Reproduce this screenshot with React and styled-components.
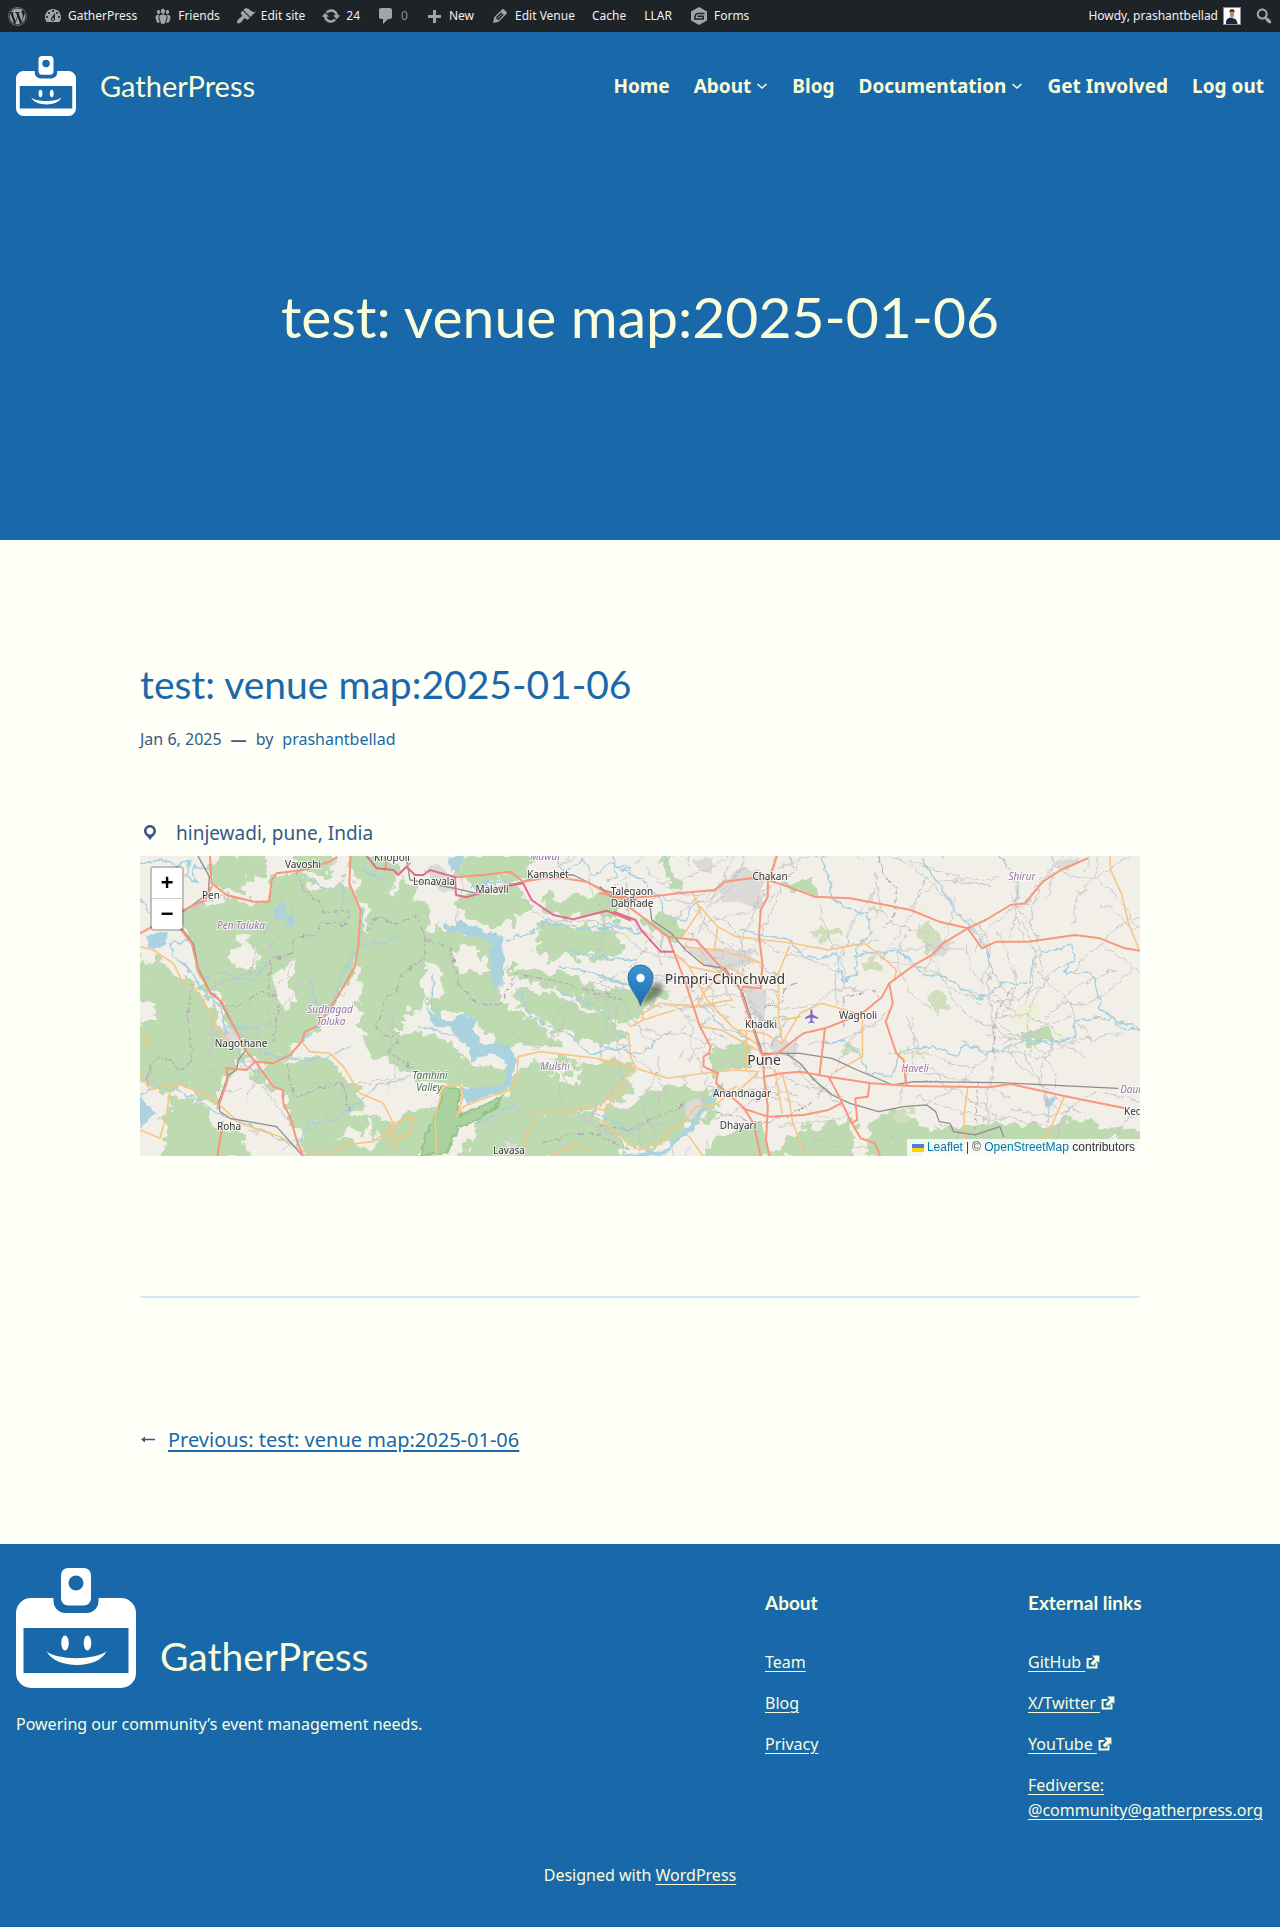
import React from "react";
import styled, { createGlobalStyle } from "styled-components";
import { FaWordpress } from "react-icons/fa";

const blue = "#1969aa";
const cream = "#fafdd9";
const paper = "#fefff6";
const ink = "#345a85";
const heading = 'Lato, "Liberation Sans", sans-serif';
const body = '"Noto Sans", "Open Sans", sans-serif';

const GlobalStyle = createGlobalStyle`
  *, *::before, *::after { box-sizing: border-box; }
  body { margin: 0; background: ${blue}; color: ${ink}; font: 16px/25px ${body}; }
  h1, h2, h3, p, ul { margin: 0; padding: 0; font-weight: 400; }
  ul { list-style: none; }
  a { color: inherit; }
  button { margin: 0; padding: 0; border: 0; background: none; color: inherit; font: inherit; cursor: pointer; }
  svg { display: block; flex: none; }
`;

/* ---------- admin bar ---------- */

const AdminBar = styled.nav`
  display: flex;
  justify-content: space-between;
  height: 32px;
  background: #1d2327;
  color: #f0f0f1;
  font-size: 12px;
  line-height: 32px;
`;
const AdminGroup = styled.ul`
  display: flex;
`;
const AdminLink = styled.a`
  display: flex;
  align-items: center;
  gap: 5px;
  height: 32px;
  padding: 0 ${(p) => (p.$plain ? "9px" : "8px")};
  color: ${(p) => (p.$dim ? "#8c9196" : "#f0f0f1")};
  text-decoration: none;
  white-space: nowrap;
  svg { color: #a0a5aa; }
`;
const Avatar = styled.svg`
  border: 1px solid #8c8f94;
  background: #fff;
`;
const SearchButton = styled.button`
  display: flex;
  align-items: center;
  padding: 0 6px 0 5px;
  height: 32px;
  color: #a0a5aa;
`;

const glyphs = {
  dashboard: "M3.76 16h12.48c1.1-1.37 1.76-3.11 1.76-5 0-4.42-3.58-8-8-8s-8 3.58-8 8c0 1.89.66 3.63 1.76 5zM10 4c.55 0 1 .45 1 1s-.45 1-1 1-1-.45-1-1 .45-1 1-1zM6 6c.55 0 1 .45 1 1s-.45 1-1 1-1-.45-1-1 .45-1 1-1zm8 0c.55 0 1 .45 1 1s-.45 1-1 1-1-.45-1-1 .45-1 1-1zm-5.37 5.55L12 7v6c0 1.1-.9 2-2 2s-2-.9-2-2c0-.57.24-1.08.63-1.45zM4 10c.55 0 1 .45 1 1s-.45 1-1 1-1-.45-1-1 .45-1 1-1zm12 0c.55 0 1 .45 1 1s-.45 1-1 1-1-.45-1-1 .45-1 1-1zm-5 3c0-.55-.45-1-1-1s-1 .45-1 1 .45 1 1 1 1-.45 1-1z",
  groups: "M8.03 4.46c-.29 1.28.55 3.46 1.97 3.46 1.41 0 2.25-2.18 1.96-3.46-.22-.98-1.08-1.63-1.96-1.63-.89 0-1.74.65-1.97 1.63zm-4.13.9c-.25 1.08.47 2.93 1.67 2.93s1.92-1.85 1.67-2.93c-.19-.83-.92-1.39-1.67-1.39s-1.48.56-1.67 1.39zm8.86 0c-.25 1.08.47 2.93 1.66 2.93 1.2 0 1.92-1.85 1.67-2.93-.19-.83-.92-1.39-1.67-1.39-.74 0-1.47.56-1.66 1.39zm-.59 11.43l1.25-4.3C14.2 10 12.71 8.47 10 8.47c-2.72 0-4.21 1.53-3.44 4.02l1.26 4.3C8.05 17.51 9 18 10 18c.98 0 1.94-.49 2.17-1.21zm-6.1-7.63c-.49.67-.96 1.83-.42 3.59l1.12 3.79c-.34.2-.77.31-1.2.31-.85 0-1.65-.41-1.85-1.03l-1.07-3.65c-.65-2.11.61-3.4 2.92-3.4.27 0 .54.02.79.06-.1.1-.2.22-.29.33zm8.35-.39c2.31 0 3.58 1.29 2.92 3.4l-1.07 3.65c-.2.62-1 1.03-1.85 1.03-.43 0-.86-.11-1.2-.31l1.11-3.77c.55-1.78.08-2.94-.42-3.61-.08-.11-.18-.23-.28-.33.25-.04.51-.06.79-.06z",
  brush: "M14.48 11.06L7.41 3.99l1.5-1.5c.5-.56 2.3-.47 3.51.32 1.21.8 1.43 1.28 2.91 2.1 1.18.64 2.45 1.26 4.45.85zm-.71.71L6.7 4.7 4.93 6.47c-.39.39-.39 1.02 0 1.41l1.06 1.06c.39.39.39 1.03 0 1.42-.6.6-1.43 1.11-2.21 1.69-.35.26-.7.53-1.01.84C1.43 14.23.4 16.08 1.4 17.07c.99 1 2.84-.03 4.18-1.36.31-.31.58-.66.85-1.02.57-.78 1.08-1.61 1.69-2.21.39-.39 1.02-.39 1.41 0l1.06 1.06c.39.39 1.02.39 1.41 0z",
  update: "M10.2 3.28c3.53 0 6.43 2.61 6.92 6h2.08l-3.5 4-3.5-4h2.32c-.45-1.97-2.21-3.45-4.32-3.45-1.45 0-2.73.71-3.54 1.78L4.95 5.66C6.23 4.2 8.11 3.28 10.2 3.28zm-.4 13.44c-3.52 0-6.43-2.61-6.92-6H.8l3.5-4c1.17 1.33 2.33 2.67 3.5 4H5.48c.45 1.97 2.21 3.45 4.32 3.45 1.45 0 2.73-.71 3.54-1.78l1.71 1.95c-1.28 1.46-3.15 2.38-5.25 2.38z",
  comment: "M5 2h9c1.1 0 2 .9 2 2v7c0 1.1-.9 2-2 2h-2l-5 5v-5H5c-1.1 0-2-.9-2-2V4c0-1.1.9-2 2-2z",
  plus: "M17 9v3h-5v5H9v-5H4V9h5V4h3v5h5z",
  pencil: "M13.89 3.39l2.71 2.72c.46.46.42 1.24.03 1.64l-8.01 8.02-5.56 1.16 1.16-5.58s7.6-7.63 7.99-8.03c.39-.39 1.22-.39 1.68.07zm-2.73 2.79l-5.59 5.61 1.11 1.11 5.54-5.65zm-2.97 8.23l5.58-5.6-1.07-1.08-5.59 5.6z",
  forms: "M10 1l8 4.500v9.500L10 19.500l-8-4.500V5.500zM15 7.300H9C6.500 7.300 5.200 9 5 13.500h9.800v-3.300H8.700",
  search: "M12.14 4.18c1.87 1.87 2.11 4.75.72 6.89.12.1.22.21.36.31.2.16.47.36.81.59.34.24.56.39.66.47.42.31.73.57.94.78.32.32.6.65.84 1 .25.35.44.69.59 1.04.14.35.21.68.18 1-.02.32-.14.59-.36.81s-.49.34-.81.36c-.31.02-.65-.04-.99-.19-.35-.14-.7-.34-1.04-.59-.35-.24-.68-.52-1-.84-.21-.21-.47-.52-.77-.93-.1-.13-.25-.35-.47-.66-.22-.32-.4-.57-.56-.78-.16-.2-.29-.35-.44-.5-2.07 1.09-4.69.76-6.44-.98-2.14-2.15-2.14-5.64 0-7.78 2.15-2.15 5.63-2.15 7.78 0zm-1.41 6.36c1.36-1.37 1.36-3.58 0-4.95-1.37-1.37-3.59-1.37-4.95 0-1.37 1.37-1.37 3.58 0 4.95 1.36 1.37 3.58 1.37 4.95 0z",
  location: "M10 2C6.69 2 4 4.69 4 8c0 2.02 1.17 3.71 2.53 4.89.43.37 1.18.96 1.85 1.83.74.97 1.41 2.01 1.62 2.71.21-.7.88-1.74 1.62-2.71.67-.87 1.42-1.46 1.85-1.83C14.83 11.71 16 10.02 16 8c0-3.31-2.69-6-6-6zm0 2.56c1.9 0 3.44 1.54 3.44 3.44S11.9 11.44 10 11.44 6.56 9.9 6.56 8 8.1 4.56 10 4.56z",
  external: "M9 2h9v9l-2.500-2L10 14.500 7 11.500 12.500 6zM13 15v-2.500l2.500-2.500v8H2V5h8L7.500 7.500h-3v8H13z",
};

const Glyph = ({ name, size = 20 }) => (
  <svg width={size} height={size} viewBox="0 0 20 20" fill="currentColor" aria-hidden="true">
    <path d={glyphs[name]} />
  </svg>
);

const FormsGlyph = () => (
  <svg width="20" height="20" viewBox="0 0 20 20" aria-hidden="true">
    <path d="M10 1l8 4.500v9L10 19l-8-4.500v-9z" fill="currentColor" />
    <path d="M15.500 7.500H8.800Q6 7.500 5.800 13H14.200V10.300H8.500" fill="none" stroke="#1d2327" strokeWidth="1.5" />
  </svg>
);

const adminItems = [
  { icon: "dashboard", text: "GatherPress" },
  { icon: "groups", text: "Friends" },
  { icon: "brush", text: "Edit site" },
  { icon: "update", text: "24" },
  { icon: "comment", text: "0", dim: true },
  { icon: "plus", text: "New" },
  { icon: "pencil", text: "Edit Venue" },
  { text: "Cache" },
  { text: "LLAR" },
  { icon: "forms", text: "Forms" },
];

/* ---------- header and hero ---------- */

const Hero = styled.header`
  background: ${blue};
  color: ${cream};
  padding-bottom: 182px;
`;
const SiteBar = styled.div`
  display: flex;
  align-items: center;
  justify-content: space-between;
  padding: 24px 16px;
`;
const Brand = styled.div`
  display: flex;
  align-items: ${(p) => (p.$large ? "flex-end" : "center")};
  gap: 24px;
  font-family: ${heading};
`;
const BrandName = styled.a`
  font-size: ${(p) => (p.$large ? "39px" : "29px")};
  line-height: ${(p) => (p.$large ? "64px" : "40px")};
  text-decoration: none;
`;
const SiteNav = styled.ul`
  display: flex;
  gap: 24px;
  font-size: 19px;
  font-weight: 700;
  line-height: 32px;
`;
const NavItem = styled.li`
  display: flex;
  align-items: center;
  gap: 5px;
`;
const NavLink = styled.a`
  text-decoration: none;
`;
const HeroTitle = styled.h1`
  padding: 134px 16px 0;
  font-family: ${heading};
  font-size: 57px;
  line-height: 84px;
  text-align: center;
`;

const Badge = ({ size }) => (
  <svg width={size} height={size} viewBox="0 0 120 120" fill="#fff" role="img" aria-label="GatherPress logo">
    <path fillRule="evenodd" d="M52 0h16a7 7 0 0 1 7 7v23.500a7 7 0 0 1-7 7H52a7 7 0 0 1-7-7V7a7 7 0 0 1 7-7zm8 7.500a7.500 7.500 0 1 0 0 15 7.500 7.500 0 0 0 0-15z" />
    <path fillRule="evenodd" d="M15 30h22.500v3A12 12 0 0 0 49.500 45h21a12 12 0 0 0 12-12v-3H105a15 15 0 0 1 15 15v60a15 15 0 0 1-15 15H15a15 15 0 0 1-15-15V45a15 15 0 0 1 15-15zM7.500 60v45h105V60z" />
    <ellipse cx="49" cy="75" rx="3.800" ry="7.500" />
    <ellipse cx="71.500" cy="75" rx="3.800" ry="7.500" />
    <path d="M30.500 83c8 9.500 51 9.500 60 0-7 18.500-52 18.500-60 0z" />
  </svg>
);

const Chevron = () => (
  <svg width="12" height="12" viewBox="0 0 12 12" fill="none" stroke="currentColor" strokeWidth="1.5" aria-hidden="true">
    <path d="M1.500 4L6 8l4.500-4" />
  </svg>
);

/* ---------- article ---------- */

const Page = styled.main`
  background: ${paper};
`;
const Article = styled.article`
  max-width: 1032px;
  margin: 0 auto;
  padding: 114px 16px 88px;
`;
const PostTitle = styled.h2`
  color: ${blue};
  font-family: ${heading};
  font-size: 39px;
  line-height: 60px;
`;
const Meta = styled.p`
  display: flex;
  gap: 9px;
  margin-top: 13px;
`;
const Dash = styled.span`
  font-weight: 700;
`;
const MetaLink = styled.a`
  color: ${blue};
  text-decoration: none;
`;
const Address = styled.p`
  display: flex;
  align-items: center;
  gap: 16px;
  margin: 66px 0 8px;
  font-size: 19px;
  line-height: 30px;
`;
const Divider = styled.hr`
  margin: 140px 0 126px;
  border: 0;
  border-top: 2px solid #d3e8f3;
`;
const Pager = styled.nav`
  display: flex;
  align-items: center;
  gap: 12px;
  font-size: 20px;
  line-height: 32px;
`;
const PagerLink = styled.a`
  color: ${blue};
  text-underline-offset: 3px;
`;

/* ---------- map ---------- */

const MapFrame = styled.section`
  position: relative;
  height: 300px;
  overflow: hidden;
  background: #f2efe9;
`;
const MapCanvas = styled.svg`
  width: 100%;
  height: 100%;
`;
const ZoomControl = styled.div`
  position: absolute;
  top: 10px;
  left: 10px;
  display: flex;
  flex-direction: column;
  border: 2px solid rgba(0, 0, 0, 0.2);
  border-radius: 4px;
  background-clip: padding-box;
`;
const ZoomButton = styled.button`
  width: 30px;
  height: 30px;
  padding-top: 4px;
  background: #fff;
  color: #000;
  font: bold 22px/26px "Liberation Mono", monospace;
  &:first-child { border-radius: 2px 2px 0 0; height: 31px; border-bottom: 1px solid #ccc; }
  &:last-child { border-radius: 0 0 2px 2px; }
`;
const Attribution = styled.div`
  position: absolute;
  right: 0;
  bottom: 0;
  display: flex;
  align-items: center;
  gap: 3px;
  padding: 0 5px;
  background: rgba(255, 255, 255, 0.8);
  color: #333;
  font: 12px/17px "Liberation Sans", Arial, sans-serif;
  a { color: #0078a8; text-decoration: none; }
`;

const forestWest = [
  "M260 50L395 50 400 100 350 110 330 150 280 145 245 110Z",
  "M165 225L240 190 420 195 435 110 520 108 540 160 600 170 640 120 690 210 685 330 650 420 600 480 545 560 500 600 430 660 380 650 330 590 280 480 240 460 200 380 185 290Z",
  "M480 50L600 50 590 85 520 95ZM670 50L790 60 810 110 760 130 780 170 720 190 690 150Z",
  "M30 355L100 370 150 430 190 440 240 510 270 590 330 640 290 700 250 780 150 730 60 740 30 700Z",
  "M120 780L200 800 250 860 330 890 350 950 100 950 120 880Z",
  "M370 700L430 670 470 660 620 670 690 770 650 820 560 830 500 860 460 750Z",
  "M705 290L740 200 830 140 880 210 885 350 870 480 800 560 740 610 700 560Z",
  "M890 290L960 260 1080 310 1090 420 1120 500 1200 540 1270 600 1150 600 1060 560 1000 500 920 520 880 430Z",
  "M1000 60L1190 50 1180 100 1060 130 990 100ZM1000 170L1150 150 1190 200 1120 260 1010 220Z",
  "M1250 190L1420 165 1500 190 1440 210 1300 225ZM1215 270L1340 260 1465 290 1440 345 1310 330 1240 350Z",
  "M1150 395L1240 400 1350 440 1490 465 1500 510 1400 480 1300 450ZM1160 450L1280 480 1400 530 1470 590 1380 600 1250 540 1180 490Z",
  "M1160 690L1300 665 1500 690 1480 760 1400 800 1230 820 1190 900 1170 950 1000 950 1050 850 1130 770Z",
  "M1210 870L1260 830 1400 830 1440 860 1470 950 1180 950Z",
  "M700 600L860 580 960 620 1020 670 1130 700 1100 740 980 740 940 720 870 700 740 640Z",
  "M520 870L650 830 760 860 900 790 960 830 900 950 530 950Z",
  "M1200 600L1290 620 1160 610ZM1050 550L1200 560 1250 600 1100 620Z",
];
const clearings = [
  "M315 310L345 285 395 340 380 385 310 375Z",
  "M440 400L490 360 485 430 500 490 460 500 430 440Z",
  "M30 490L90 500 60 540 30 560Z",
  "M560 640L640 600 690 590 760 680 740 730 690 740Z",
  "M860 430L905 370 950 400 930 480 880 470Z",
  "M960 330L1040 320 1070 400 1000 390Z",
  "M1250 700L1360 680 1330 740Z",
  "M620 890L740 850 730 920Z",
  "M1150 300L1240 310 1220 380 1150 370Z",
];
const forestEast = [
  "M0 180L60 190 40 215 0 210ZM0 290L50 295 40 345 0 350ZM0 460L90 450 180 470 120 520 0 530ZM0 550L40 560 40 600 0 600ZM0 670L50 660 60 760 0 760Z",
  "M0 830L80 800 200 740 290 765 330 800 250 850 130 930 60 890 0 880Z",
  "M120 240L205 240 215 290 170 290ZM180 50L200 60 195 95 185 90ZM205 110L225 120 220 155 200 150ZM520 130L590 125 580 145 530 145Z",
  "M310 650L400 620 420 670 330 685ZM290 950L370 880 440 860 460 950ZM480 950L580 870 700 850 700 950Z",
  "M760 860L820 820 900 850 900 950 760 950ZM900 890L1090 850 1200 870 1360 840 1410 870 1500 880 1500 900 900 920ZM1190 580L1250 580 1260 600 1200 600Z",
];
const scrub = [
  "M890 240L940 260 960 310 930 350 900 310ZM590 280L650 265 680 290 620 310ZM920 480L960 460 990 500 940 520ZM730 350L780 360 800 400 740 390ZM670 615L710 620 720 640 690 640ZM820 820L870 810 890 840 830 840ZM1340 145L1380 150 1350 170ZM755 200L790 190 770 240Z",
];
const farmland = [
  "M840 620L920 620 930 655 860 670ZM1170 500L1225 510 1220 570 1170 560ZM1280 570L1330 580 1300 610ZM890 190L940 200 900 220ZM70 280L110 260 90 310Z",
];
const urbanEast = [
  "M330 130L400 80 460 100 450 210 400 190 340 180ZM400 440L470 450 460 540 420 520ZM240 790L290 780 260 840 235 830ZM260 60L320 50 310 100 270 90ZM230 320L420 330 430 370 330 400ZM480 600L560 610 540 650 480 640ZM1280 60L1340 50 1330 80 1290 90ZM920 310L990 300 960 350 930 340Z",
];
const urbanWest = ["M880 90L920 70 960 110 970 160 930 150ZM275 560L300 560 330 600 290 610ZM350 870L400 860 380 890ZM1110 905L1170 910 1150 930ZM600 60L625 50 610 80Z"];
const lakesWest = [
  "M940 250L970 262 990 240 1030 262 1075 275 1120 290 1118 440 1090 448 1085 390 1080 310 1040 290 990 275 940 272Z",
  "M890 500L910 525 960 545 1010 520 1040 540 1030 570 1060 610 1140 612 1158 660 1145 740 1080 765 1010 790 990 745 1060 740 1120 735 1130 660 1080 640 1020 665 1020 620 980 590 960 560 910 560Z",
  "M430 200L460 185 475 230 500 245 485 265 460 240 435 235Z",
  "M950 50L1000 50 985 100 960 90ZM50 290L110 275 105 315 70 330 50 320ZM30 760L45 790 75 820 40 860 30 860Z",
];
const riversWest = [
  "M30 70L90 60 140 75 180 60 170 110 200 130 190 80 240 90M30 180L60 215M230 410L270 395 340 420 380 410 410 370",
  "M180 300L120 310 130 350 170 380 220 450 270 500 290 590 330 640 350 680 400 700M400 640L500 660 580 655 660 620",
  "M540 420L560 490 580 540M520 600L600 520 640 400 690 320M700 200L690 300M640 120L640 210M700 320L810 290",
  "M910 400L905 500 960 560M880 560L980 590M1170 450L1200 530 1330 590 1370 640 1500 620",
  "M520 100L560 130 600 155M1190 50L1280 50 1300 100 1360 60 1390 110 1440 70 1500 90M1130 300L1200 280 1250 245 1350 265 1500 265",
  "M1290 380L1400 400 1500 440M1290 455L1400 500 1490 600M1310 330L1400 350 1500 360M30 760L90 740 140 750 220 790 280 830 400 870 490 920",
  "M500 920L540 850 620 840 680 790 740 740 840 710M1040 850L1150 795 1210 830 1200 840M700 90L760 120M1020 140L1080 125 1180 130M290 560L390 560M1380 820L1430 830 1500 880",
];
const riversEast = [
  "M40 50L45 110 20 120M60 90L120 120 170 180 180 230 240 240 260 200M530 50L540 80M620 50L640 110 650 180 700 210 750 220 760 280 720 320 715 350",
  "M390 270L440 280 530 300 570 350 620 355 660 340 680 430 720 400 720 350 760 335 850 340 900 400 960 410 1060 475 1130 430 1200 430 1220 350 1260 330 1320 315 1330 350 1300 400 1380 400 1400 500 1460 560 1512 570",
  "M900 60L960 150 1000 220 1030 250 1080 320 1100 400M1120 50L1170 120 1170 180M0 250L60 260 110 280M0 350L100 360M0 410L80 440M480 620L530 530 500 530 460 560",
  "M730 660L750 700 820 710 840 630 930 620 1000 650 1020 610 1080 640 1140 620 1210 600 1270 610 1330 590 1330 540 1400 530 1512 560M0 620L120 640 170 590",
  "M280 490L340 560 420 600M620 610L680 600 730 650M180 70L200 40M960 50L950 0",
];
const boundaries = [
  ["w", "M500 95L520 150 570 190 580 220 660 210 650 250 570 250 560 290 500 290 480 340 420 360 420 460M440 470L390 460 320 500 270 495M440 470L450 520 430 600M190 430L170 530 190 660 150 690 110 650 60 670 50 740"],
  ["w", "M710 270L740 230 800 255 860 225 885 290 885 350 820 400 800 450 770 470 740 560 760 590 810 580 780 640 870 700M470 670L480 730 500 770 560 750 640 730 660 820M890 300L960 320 990 440 1040 490 1110 495 1160 400 1300 430 1480 480M1240 910L1330 880 1390 880 1500 930"],
  ["e", "M780 50L800 110 830 150 820 240 780 270M550 430L520 440 510 490 460 500M680 560L680 470 760 450 790 480M1100 640L1105 530 1160 440M1060 730L1050 870M330 820L450 850 530 830 600 780M0 860L80 870 240 790"],
];
const orangeWest = [
  "M30 320L70 330 130 370 160 430 190 440 230 500 270 580 320 620M30 580L58 600 40 620M30 700L60 750 140 730 240 770 330 850 450 890 520 935 620 935 640 915 730 905 790 860",
  "M120 750L110 820 90 895 30 870M515 605L540 635 600 640 640 680 690 760 760 790 790 850 770 890 800 930M850 830L790 850 800 900 840 880ZM920 950L915 830 940 740 990 735 1000 770 980 830 1000 800 1050 780 1140 750 1160 720 1165 650 1230 635 1400 655 1500 680",
  "M1180 920L1190 880 1215 850 1200 820 1300 820 1370 800 1420 810 1450 780 1490 740M1260 940L1320 930 1330 910 1380 930",
];
const orangeEast = [
  "M120 520L170 490 270 500 340 485 370 480M260 160L280 210 230 290M280 200L330 260 380 290 460 300 540 310 640 330 740 310 790 350 830 390 825 420M530 320L500 400 500 540 510 600M510 610L560 520 620 490 720 520",
  "M735 530L735 650 660 695M510 540L560 530M80 580L85 650 100 680 60 730 0 800M0 660L100 685 190 715 290 700 380 690 440 695M120 540L85 560M120 520L120 540 210 510",
  "M1428 50L1430 90 1460 160 1480 250 1510 330M1030 740L1020 820 1020 950M1300 770L1260 870 1240 900M490 690L500 760 510 820M510 700L530 780 540 850 570 930 580 950",
  "M210 340L250 380 280 440 300 480 370 560 450 620M230 320L330 330 400 350 450 370M330 260L320 330M360 380L420 420M270 500L290 460 350 380M280 560L340 570 440 630M410 570L410 690M440 700L380 760M390 570L460 580 510 610M280 350L290 370M340 400L250 380",
  "M0 840L60 890 110 930 180 900 190 870 230 850 270 800 330 790 380 740M250 890L290 950",
];
const redWest = [
  "M240 50L245 130 290 165 370 185 418 185 425 120 440 100 520 90 600 65 620 52M30 280L150 215 225 180 245 140",
  "M150 265L185 310 205 390 240 460 275 485 320 575 345 630 380 670 430 740 458 750 460 790 480 830 500 900 520 950",
  "M662 50L658 130 692 210 685 320 675 380 640 440 610 490 560 560 525 575 515 605 480 645 430 670 375 665 350 690 290 685 293 720 265 800M275 870L262 950",
  "M975 112L1060 105 1140 95 1180 125 1240 115 1300 115 1370 125 1440 165 1500 180M815 95L840 70M770 60L765 90",
];
const redEast = [
  "M0 160L80 175 180 165 220 160 320 150 350 125 420 115 470 120 540 145 600 170 700 175 800 195 870 210 950 245 1030 265 1070 325 1110 305 1200 305 1330 285 1400 295 1470 325 1512 332",
  "M495 50L470 125 470 170 450 210 445 290 455 370 450 445 400 440 395 460 430 570 450 640",
  "M1365 55L1290 90 1240 125 1190 190 1150 195 1080 240 1030 265 960 310 930 345 880 375 810 430 790 470 740 515 690 540 630 565 570 580 520 620 500 640 455 645",
  "M80 200L130 240 190 290 270 300 320 360 390 440M190 290L240 430 280 560 310 620 305 640 290 650 290 680 330 700 325 730 400 800 430 850 450 950",
  "M455 640L460 720 470 800 465 900 475 950M460 710L510 700 560 695 640 710 760 730 870 738 1090 742 1150 732 1300 768 1470 805M630 565L615 700",
  "M810 430L820 490 800 545 830 640 850 660 855 715 860 735M640 710L670 770 700 840 730 895 770 910 785 950M755 730L750 770 715 775 720 840 705 850M400 805L470 830 570 825 640 810 675 790",
];
const railWest = ["M205 50L238 110 235 160 160 215M155 265L190 310 205 385 240 455 265 475 325 585 348 630 325 660 320 690 295 705 265 790 270 815 300 835 440 860 520 950", "M830 60L840 120 975 145 1040 160 1180 125 1230 105 1330 105 1420 150 1500 175"];
const railEast = ["M0 140L30 170 100 180 140 200 145 240 200 280 240 330 290 375 350 385 400 460 430 560 455 640 560 640 650 655 720 690 820 735 880 725 1120 728 1250 735 1450 745", "M520 640L560 670 600 720 650 765 700 790 780 815 850 800 915 795 940 815 950 845 980 850 990 875 1050 885 1120 860 1130 890"];
const motorwayWest = ["M712 50L740 85 790 90 805 105 830 80 855 105 880 105 900 90 975 112 978 165 1010 172 1100 145 1180 130 1205 180 1270 225 1330 238 1430 212 1500 240"];
const motorwayEast = ["M40 216L100 240 115 270 170 335 205 335"];

/* Fine local roads: a wandering lattice drawn from a fixed seed. */
const lanes = (() => {
  let seed = 7;
  const rnd = () => ((seed = (seed * 16807) % 2147483647) / 2147483647);
  const out = [];
  for (let i = 0; i < 150; i++) {
    let x = i < 26 ? rnd() * 460 : 450 + rnd() * 540;
    let y = rnd() * 300;
    let a = (Math.floor(rnd() * 4) * Math.PI) / 2 + rnd() * 0.6;
    let d = `M${x.toFixed(0)} ${y.toFixed(0)}`;
    for (let k = 0; k < 7; k++) {
      a += (rnd() - 0.5) * 0.9;
      x += Math.cos(a) * 13;
      y += Math.sin(a) * 13;
      d += `L${x.toFixed(0)} ${y.toFixed(0)}`;
    }
    out.push(d);
  }
  for (let i = 0; i < 60; i++) {
    const x = 530 + rnd() * 110;
    const y = 90 + rnd() * 150;
    out.push(`M${x.toFixed(0)} ${y.toFixed(0)}l${(rnd() * 24 - 12).toFixed(0)} ${(rnd() * 24 - 12).toFixed(0)}l${(rnd() * 16 - 8).toFixed(0)} ${(rnd() * 16 - 8).toFixed(0)}`);
  }
  return out.join("");
})();

const WEST = "matrix(0.3333 0 0 0.3333 -10 -16)";
const EAST = "matrix(0.3571 0 0 0.3333 460 -16)";

const Areas = ({ west = [], east = [], fill, grow = 0 }) => (
  <g fill={fill} stroke={fill} strokeWidth={grow} strokeLinejoin="round">
    <path transform={WEST} d={west.join("")} />
    <path transform={EAST} d={east.join("")} />
  </g>
);
const Lines = ({ west = [], east = [], stroke, width, ...rest }) => (
  <g fill="none" stroke={stroke} strokeWidth={width} strokeLinejoin="round" strokeLinecap="round" {...rest}>
    <path vectorEffect="non-scaling-stroke" transform={WEST} d={west.join("")} />
    <path vectorEffect="non-scaling-stroke" transform={EAST} d={east.join("")} />
  </g>
);

const places = [
  [163, 12, "Vavoshi"], [71, 43, "Pen"], [252, 5, "Khopoli"], [294, 29, "Lonavala"], [352, 37, "Malavli"],
  [408, 22, "Kamshet"], [492, 39, "Talegaon"], [492, 51, "Dabhade"], [630, 24, "Chakan"], [101, 191, "Nagothane"],
  [89, 274, "Roha"], [369, 298, "Lavasa"], [621, 172, "Khadki"], [718, 163, "Wagholi"], [602, 241, "Anandnagar"],
  [598, 273, "Dhayari"], [1005, 259, "Kedgaon"],
];
const regions = [
  [101, 73, "Pen Taluka"], [190, 157, "Sudhagad"], [191, 169, "Taluka"], [415, 214, "Mulshi"],
  [405, 4, "Mawal"], [882, 24, "Shirur"], [775, 216, "Haveli"], [995, 237, "Daund"],
];

const VenueMap = () => (
  <MapFrame aria-label="Map of Pune and surroundings">
    <MapCanvas viewBox="0 0 1000 300" preserveAspectRatio="xMidYMid slice" role="img" aria-label="Street map">
      <defs>
        <filter id="ragged" x="-5%" y="-5%" width="110%" height="110%">
          <feTurbulence type="fractalNoise" baseFrequency="0.07" numOctaves="3" seed="4" />
          <feDisplacementMap in="SourceGraphic" scale="26" xChannelSelector="R" yChannelSelector="G" />
        </filter>
        <filter id="wander" x="-5%" y="-5%" width="110%" height="110%">
          <feTurbulence type="fractalNoise" baseFrequency="0.12" numOctaves="2" seed="9" />
          <feDisplacementMap in="SourceGraphic" scale="8" xChannelSelector="R" yChannelSelector="G" />
        </filter>
        <filter id="soft" x="-30%" y="-30%" width="160%" height="160%"><feGaussianBlur stdDeviation="2" /></filter>
        <linearGradient id="pin" x1="0" y1="0" x2="0" y2="1">
          <stop offset="0" stopColor="#3f96cf" />
          <stop offset="1" stopColor="#1a6bb5" />
        </linearGradient>
      </defs>
      <rect width="1000" height="300" fill="#f2efe9" />
      <g filter="url(#ragged)">
        <Areas west={forestWest} east={forestEast} fill="#bddab1" grow={20} />
        <Areas west={clearings} fill="#f2efe9" />
        <Areas east={scrub} fill="#d0dfba" />
        <Areas east={farmland} fill="#eef0d5" />
      </g>
      <g filter="url(#wander)">
        <Areas west={urbanWest} east={urbanEast} fill="#dcdad8" />
        <Areas west={lakesWest} fill="#aad3df" />
        <path d="M907 242l9-2 1 6-6 7-6-3z" fill="#aad3df" />
        <path d={lanes} fill="none" stroke="#c6c3c6" strokeWidth="0.9" />
        <Lines west={riversWest} east={riversEast} stroke="#a5cfe0" width="1.5" />
        <Lines east={["M50 950L180 940 220 890 250 870 290 800 340 740"]} stroke="#aad3df" width="4" />
        <path transform={WEST} d="M940 740L990 745 985 830 1050 800 1115 770 1100 800 1040 840 990 860 950 940 870 945 890 880 920 830Z" fill="#a9d29f" stroke="#8fc486" strokeWidth="6" />
      </g>
      <g filter="url(#wander)">
        <Lines west={boundaries.filter((b) => b[0] === "w").map((b) => b[1])} east={boundaries.filter((b) => b[0] === "e").map((b) => b[1])} stroke="#b3a3b6" width="1.2" strokeDasharray="5 3 1 3" />
      </g>
      <Lines west={orangeWest} east={orangeEast} stroke="#f8c583" width="1.6" />
      <Lines west={railWest} east={railEast} stroke="#8f8d8c" width="1.3" />
      <Lines west={redWest} east={redEast} stroke="#f9977c" width="2" />
      <Lines west={motorwayWest} east={motorwayEast} stroke="#e56b8c" width="2" />
      <path d="M671 153l1.500 1.500v4l5.500 3v1.500l-5.500-1.500v3.500l2 1.500v1l-3-1-3 1v-1l2-1.500v-3.500l-5.500 1.500v-1.500l5.500-3v-4z" fill="#8461c4" />
      <g fontFamily='"Noto Sans", sans-serif' textAnchor="middle" stroke="#fff" strokeOpacity="0.7" strokeWidth="2" paintOrder="stroke" fontSize="10">
        {places.map(([x, y, t]) => <text key={t} x={x} y={y} fill="#333">{t}</text>)}
        {regions.map(([x, y, t]) => <text key={t} x={x} y={y} fill="#9a72a5" fontStyle="italic">{t}</text>)}
        <g fill="#4d7050" fontStyle="italic">
          <text x="290" y="223">Tamhini</text>
          <text x="289" y="235">Valley</text>
        </g>
        <g fill="#333" fontSize="14">
          <text x="585" y="128">Pimpri-Chinchwad</text>
          <text x="624" y="209">Pune</text>
        </g>
      </g>
      <path d="M501 149l8-18q8-8 13-3t-7 14z" fill="#000" opacity="0.4" filter="url(#soft)" />
      <path d="M500.500 150c-1-8-12.500-18-12.500-28.500a12.500 12.500 0 0 1 25 0c0 10.500-11.500 20.500-12.500 28.500z" fill="url(#pin)" stroke="#2e6c97" strokeWidth="1" />
      <circle cx="500.500" cy="122" r="4.200" fill="#fff" />
    </MapCanvas>
    <ZoomControl>
      <ZoomButton type="button" aria-label="Zoom in">+</ZoomButton>
      <ZoomButton type="button" aria-label="Zoom out">−</ZoomButton>
    </ZoomControl>
    <Attribution>
      <svg width="12" height="8" viewBox="0 0 12 8" aria-hidden="true">
        <path fill="#4C7BE1" d="M0 0h12v4H0z" />
        <path fill="#FFD500" d="M0 4h12v4H0z" />
      </svg>
      <a href="#leaflet">Leaflet</a>
      <span>|</span>
      <span>© <a href="#osm">OpenStreetMap</a> contributors</span>
    </Attribution>
  </MapFrame>
);

/* ---------- footer ---------- */

const Footer = styled.footer`
  padding: 24px 16px 40px;
  background: ${blue};
  color: ${cream};
`;
const FooterGrid = styled.div`
  display: grid;
  grid-template-columns: minmax(0, 1fr) 236px 236px;
  gap: 27px;
`;
const Tagline = styled.p`
  margin-top: 24px;
`;
const LinkColumn = styled.nav`
  padding-top: 20px;
`;
const ColumnTitle = styled.h3`
  margin-bottom: 32px;
  font-family: ${heading};
  font-size: 19px;
  font-weight: 700;
  line-height: 30px;
`;
const LinkList = styled.ul`
  display: flex;
  flex-direction: column;
  gap: 16px;
`;
const FooterLink = styled.a`
  text-underline-offset: 3px;
  svg { display: inline-block; vertical-align: -2px; }
`;
const Credit = styled.p`
  margin-top: 40px;
  text-align: center;
`;

export default function App() {
  return (
    <>
      <GlobalStyle />
      <AdminBar aria-label="Toolbar">
        <AdminGroup>
          <li><AdminLink href="#wp" aria-label="About WordPress"><FaWordpress size={19} /></AdminLink></li>
          {adminItems.map((item) => (
            <li key={item.text}>
              <AdminLink href="#admin" $dim={item.dim} $plain={!item.icon}>
                {item.icon === "forms" ? <FormsGlyph /> : item.icon && <Glyph name={item.icon} />}
                {item.text}
              </AdminLink>
            </li>
          ))}
        </AdminGroup>
        <AdminGroup>
          <li>
            <AdminLink href="#profile">
              Howdy, prashantbellad
              <Avatar width="18" height="18" viewBox="0 0 16 16" aria-hidden="true">
                <path d="M2 16v-3q1-3 4-3.500l4 1q3 .5 3.500 5.500z" fill="#1b2440" />
                <path d="M6 3h4v5l-2 2.500L6 8z" fill="#b98a76" />
                <path d="M5.500 5V2.500Q8 0 10.500 2.500V5L10 3.500H6z" fill="#2a2020" />
              </Avatar>
            </AdminLink>
          </li>
          <li><SearchButton type="button" aria-label="Search"><Glyph name="search" /></SearchButton></li>
        </AdminGroup>
      </AdminBar>

      <Hero>
        <SiteBar>
          <Brand>
            <Badge size={60} />
            <BrandName href="#home">GatherPress</BrandName>
          </Brand>
          <nav aria-label="Main">
            <SiteNav>
              {["Home", "About", "Blog", "Documentation", "Get Involved", "Log out"].map((t) => (
                <NavItem key={t}>
                  <NavLink href="#page">{t}</NavLink>
                  {(t === "About" || t === "Documentation") && (
                    <button type="button" aria-label={`${t} submenu`}><Chevron /></button>
                  )}
                </NavItem>
              ))}
            </SiteNav>
          </nav>
        </SiteBar>
        <HeroTitle>test: venue map:2025-01-06</HeroTitle>
      </Hero>

      <Page>
        <Article>
          <PostTitle>test: venue map:2025-01-06</PostTitle>
          <Meta>
            <time dateTime="2025-01-06">Jan 6, 2025</time>
            <Dash>—</Dash>
            <span>by</span>
            <MetaLink href="#author">prashantbellad</MetaLink>
          </Meta>
          <Address>
            <Glyph name="location" />
            <span>hinjewadi, pune, India</span>
          </Address>
          <VenueMap />
          <Divider />
          <Pager aria-label="Posts">
            <svg width="16" height="16" viewBox="0 0 16 16" fill="currentColor" aria-hidden="true">
              <path d="M1 7.500L5 4.500V6.800H15V8.200H5V10.500Z" />
            </svg>
            <PagerLink href="#previous">Previous: test: venue map:2025-01-06</PagerLink>
          </Pager>
        </Article>
      </Page>

      <Footer>
        <FooterGrid>
          <div>
            <Brand $large>
              <Badge size={120} />
              <BrandName href="#home" $large>GatherPress</BrandName>
            </Brand>
            <Tagline>Powering our community’s event management needs.</Tagline>
          </div>
          <LinkColumn aria-label="About">
            <ColumnTitle>About</ColumnTitle>
            <LinkList>
              {["Team", "Blog", "Privacy"].map((t) => (
                <li key={t}><FooterLink href="#about">{t}</FooterLink></li>
              ))}
            </LinkList>
          </LinkColumn>
          <LinkColumn aria-label="External links">
            <ColumnTitle>External links</ColumnTitle>
            <LinkList>
              {["GitHub", "X/Twitter", "YouTube"].map((t) => (
                <li key={t}><FooterLink href="#external">{t} <Glyph name="external" size={16} /></FooterLink></li>
              ))}
              <li><FooterLink href="#fediverse">Fediverse: @community@gatherpress.org</FooterLink></li>
            </LinkList>
          </LinkColumn>
        </FooterGrid>
        <Credit>Designed with <FooterLink href="#wordpress">WordPress</FooterLink></Credit>
      </Footer>
    </>
  );
}
